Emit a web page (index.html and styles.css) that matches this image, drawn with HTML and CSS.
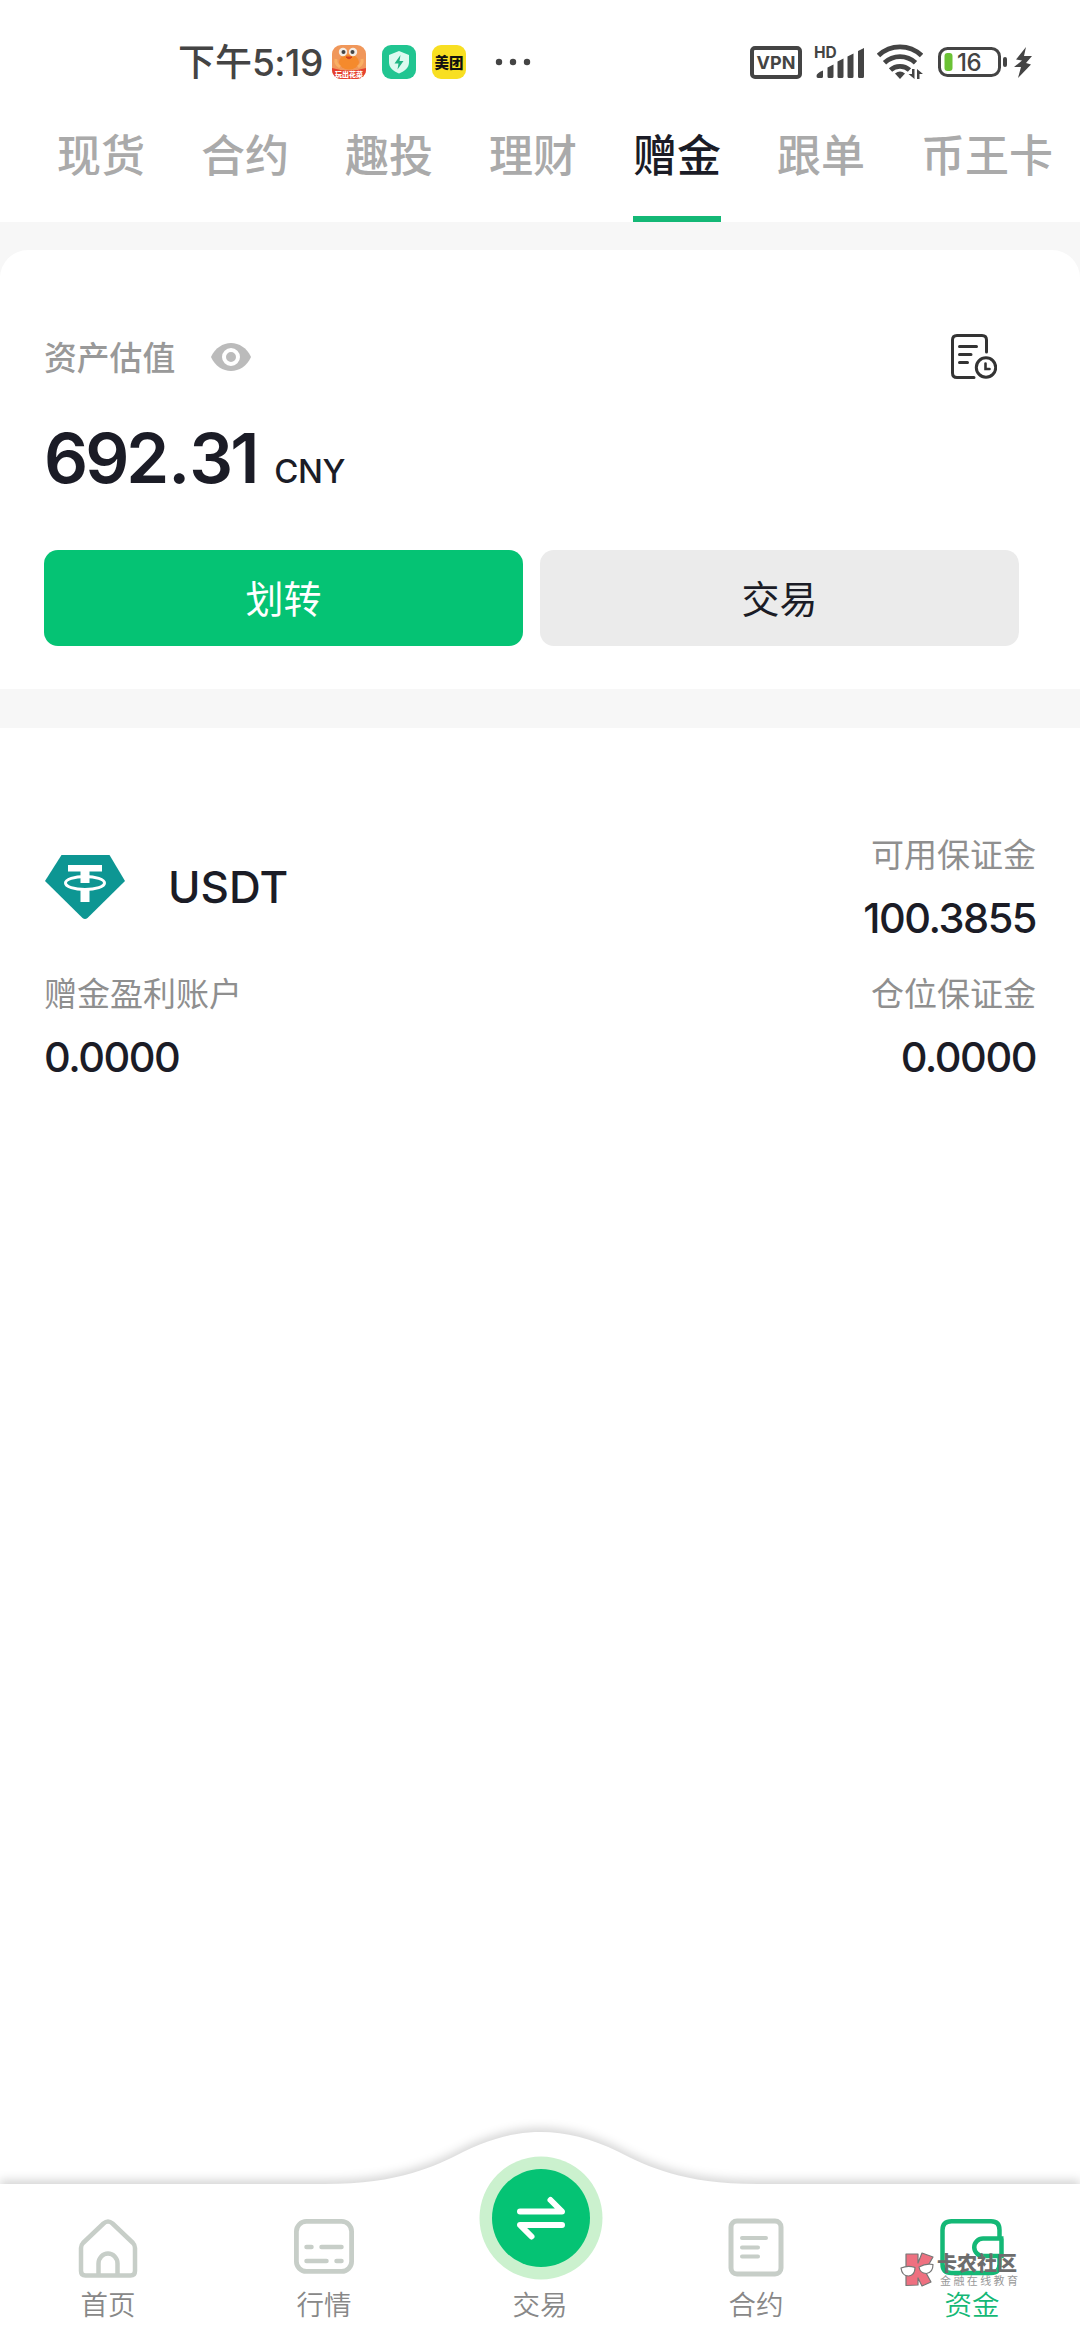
FILE: index.html
```html
<!DOCTYPE html>
<html lang="zh-CN">
<head>
<meta charset="utf-8">
<title>赠金</title>
<link rel="stylesheet" href="styles.css">
</head>
<body>
<div class="app">
  <header class="status">
    <div class="status-left">
      <span class="clock">下午<span class="clock-num">5:19</span></span>
      <div class="apps">
        <svg width="34" height="34" viewBox="0 0 34 34">
          <defs><clipPath id="tile"><rect width="34" height="34" rx="9"/></clipPath></defs>
          <g clip-path="url(#tile)">
            <rect width="34" height="34" fill="#f0975a"/>
            <ellipse cx="17" cy="17" rx="10" ry="7.500" fill="#f58a2c"/>
            <path d="M4 14q-1 5 4 8M30 14q1 5-4 8" stroke="#f9b064" stroke-width="3" fill="none"/>
            <circle cx="11" cy="7" r="4.200" fill="#f3ece4"/><circle cx="21" cy="7" r="4.200" fill="#f3ece4"/>
            <circle cx="11.500" cy="7" r="2" fill="#444"/><circle cx="20.500" cy="7" r="2" fill="#444"/>
            <path d="M14 12q3 3.500 6 0z" fill="#d2401c" stroke="#d2401c"/>
            <path d="M0 23q17 5 34 0v11H0z" fill="#e5402f"/>
          </g>
          <text class="tile-caption" x="17" y="31.500" text-anchor="middle">玩出花菜</text>
        </svg>
        <svg width="34" height="34" viewBox="0 0 34 34">
          <rect width="34" height="34" rx="9" fill="#21c591"/>
          <path d="M17 6l10 4v7c0 6-4 9-10 11.500C11 26 7 23 7 17v-7z" fill="#dcfaf0"/>
          <path d="M18.500 10l-6 8.500h4l-1 6 6-8.500h-4z" fill="#1fb483"/>
        </svg>
        <svg width="34" height="34" viewBox="0 0 34 34">
          <rect width="34" height="34" rx="9" fill="#f8df22"/>
          <text class="meituan" x="17" y="22.500" text-anchor="middle">美团</text>
        </svg>
      </div>
      <svg class="more" width="36" height="8" viewBox="0 0 36 8" fill="#444"><circle cx="4" cy="4" r="3.200"/><circle cx="18" cy="4" r="3.200"/><circle cx="32" cy="4" r="3.200"/></svg>
    </div>
    <div class="status-right">
      <span class="vpn">VPN</span>
      <svg class="signal" width="52" height="34" viewBox="0 0 52 34" fill="#444">
        <text class="hd" x="0" y="13">HD</text>
        <path d="M4 33q-1.500 0-1.500-2 0-3 6.500-5.500v6q0 1.500-1.500 1.500zM13.500 22.500l6-3v12q0 1.500-1.500 1.500h-3q-1.500 0-1.500-1.500zM23.500 16.500l6-3v18q0 1.500-1.500 1.500h-3q-1.500 0-1.500-1.500zM33.500 11.500l6-3v23q0 1.500-1.500 1.500h-3q-1.500 0-1.500-1.500zM44 6l6-3v28.500q0 1.500-1.500 1.500h-3q-1.500 0-1.500-1.500z"/>
      </svg>
      <svg class="wifi" width="46" height="36" viewBox="0 0 46 36" fill="none" stroke="#444" stroke-width="4.800">
        <path d="M1.500 11.500a31 31 0 0 1 43 0M7.500 18.800a22.500 22.500 0 0 1 31 0M13.500 26a14 14 0 0 1 19 0"/>
        <path d="M18 29.500q5-4 10 0l-5 5.500z" fill="#444" stroke="none"/>
        <path d="M37.500 25v10l-6-5h3.500v-5zM40 35v-10l6 5h-3.500v5z" fill="#444" stroke="none"/>
      </svg>
      <svg class="battery" width="70" height="30" viewBox="0 0 70 30">
        <rect x="1.500" y="1.500" width="60" height="27" rx="8" fill="none" stroke="#444" stroke-width="3"/>
        <rect x="6.500" y="6" width="8" height="18" rx="3" fill="#6bc235"/>
        <rect x="65" y="10" width="4" height="10" rx="2" fill="#444"/>
        <text class="charge" x="19" y="23.500">16</text>
      </svg>
      <svg width="18" height="31" viewBox="0 0 18 31" fill="#444"><path d="M12 0L2 12.500l6 1L0 20h7L4 31 17 17.500l-5-1.500 6-7h-8z"/></svg>
    </div>
  </header>

  <nav class="tabs">
    <span class="tab">现货</span><span class="tab">合约</span><span class="tab">趣投</span><span class="tab">理财</span><span class="tab active">赠金</span><span class="tab">跟单</span><span class="tab">币王卡</span>
  </nav>

  <main class="content">
    <section class="summary">
      <div class="summary-head">
        <span class="caption">资产估值</span>
        <svg class="eye" width="40" height="28" viewBox="0 0 40 28">
          <path d="M0 14C4 5 12 0 20 0s16 5 20 14c-4 9-12 14-20 14S4 23 0 14z" fill="#bbb"/>
          <circle cx="20" cy="14" r="7" fill="#bbb" stroke="#fff" stroke-width="4"/>
        </svg>
        <svg class="history" width="46" height="46" viewBox="0 0 46 46" fill="none" stroke="#333" stroke-width="3" stroke-linecap="round">
          <path d="M35.500 18V6q0-4.500-4.500-4.500H6Q1.500 1.500 1.500 6v33q0 4.500 4.500 4.500h17M8.500 12.500h17M8.500 20.500h11.500M8.500 28.500h8"/>
          <circle cx="35" cy="33.500" r="9.700"/><path d="M34.500 29.500v5.500h4" stroke-width="2.600"/>
        </svg>
      </div>
      <div class="total"><span class="amount">692<span class="point">.</span>31</span><span class="currency">CNY</span></div>
      <div class="actions">
        <button class="btn primary">划转</button>
        <button class="btn">交易</button>
      </div>
    </section>

    <section class="asset">
      <div class="coin">
        <svg width="82" height="66" viewBox="0 0 82 66">
          <path d="M17.500 1h48L81 27 43.500 64q-2.500 2-5 0L1 27z" fill="#0d9693"/>
          <path d="M24 11h34v6.500H45.500V29h-9V17.500H24zM36.500 34h9v14h-9z" fill="#fff"/>
          <ellipse cx="41" cy="29" rx="19.500" ry="6.500" fill="none" stroke="#fff" stroke-width="3"/>
        </svg>
        <span class="symbol">USDT</span>
      </div>
      <div class="cell right"><span class="label">可用保证金</span><span class="value">100.3855</span></div>
      <div class="cell"><span class="label">赠金盈利账户</span><span class="value">0.0000</span></div>
      <div class="cell right"><span class="label">仓位保证金</span><span class="value">0.0000</span></div>
    </section>
  </main>

  <footer class="bottom">
    <svg class="bottom-shape" width="1080" height="240" viewBox="0 0 1080 240">
      <path d="M-20 84H325C400 84 435 66 463 52 492 38 516 32 541 32s49 6 78 20c28 14 63 32 138 32h343v180H-20z" fill="#fff"/>
    </svg>
    <div class="item">
      <svg width="60" height="60" viewBox="0 0 60 60" fill="none" stroke="#c7cec8" stroke-width="4.500" stroke-linejoin="round">
        <path d="M25.500 5.500q4.500-4 9 0L55 25q2 2 2 5v23q0 4.500-4.500 4.500h-45Q3 57.500 3 53V30q0-3 2-5zM20.500 57V45.500a9.500 10 0 0 1 19 0V57"/>
      </svg>
      <span>首页</span>
    </div>
    <div class="item">
      <svg width="60" height="60" viewBox="0 0 60 60" fill="none" stroke="#c7cec8" stroke-width="4.800" stroke-linecap="round">
        <rect x="2.400" y="3.400" width="55.200" height="50" rx="10"/><path d="M12.500 29h5M27.500 29h20M12.500 43h20M42.500 43h5" stroke-width="4.500"/>
      </svg>
      <span>行情</span>
    </div>
    <div class="item trade">
      <svg width="124" height="124" viewBox="0 0 124 124">
        <circle cx="62" cy="62" r="61.500" fill="#cbf1ce"/><circle cx="62" cy="62" r="49" fill="#05c374"/>
        <path d="M41 55.500h42L71.500 44M83 69H41l11.500 11.500" fill="none" stroke="#fff" stroke-width="6" stroke-linecap="round" stroke-linejoin="round"/>
      </svg>
      <span>交易</span>
    </div>
    <div class="item">
      <svg width="60" height="60" viewBox="0 0 60 60" fill="none" stroke="#c7cec8" stroke-width="5" stroke-linecap="round">
        <rect x="5" y="3" width="50" height="53" rx="6"/><path d="M16 20h24M16 29.500h16M16 38.500h16" stroke-width="4"/>
      </svg>
      <span>合约</span>
    </div>
    <div class="item selected">
      <svg width="66" height="60" viewBox="0 0 66 60" fill="none" stroke="#14b876" stroke-width="4.500">
        <path d="M60.500 20V12q0-8.700-8.500-8.700H12.500Q3.500 3.300 3.500 12v34q0 9 9 9h39.500q8.500 0 8.500-9v-8M64.500 20.500H44a8.700 8.700 0 0 0 0 17.500h18.500V20.500"/>
      </svg>
      <span>资金</span>
    </div>
    <div class="watermark">
      <svg width="36" height="36" viewBox="0 0 36 36" stroke="#777" stroke-width="1.200" stroke-linejoin="round">
        <path d="M6 2h12v9l4-10 11 4-8 14 6 11-9 4-4-8v7l-12 .5z" fill="#ee7080"/>
        <path d="M1 16q7-3 14-.5 0 8-6.500 8.500Q2 24 1 16zM19 15q7-4 14-2.500 0 8-6.500 9-6.500 0-7.500-6.500z" fill="#fff"/>
      </svg>
      <div class="mark-text"><b>卡农社区</b><span>金融在线教育</span></div>
    </div>
  </footer>
</div>
</body>
</html>
```
FILE: styles.css
```css
* { box-sizing: border-box; }
body { margin: 0; background: #fff; }
svg { display: block; flex: none; }

.app {
  width: 1080px;
  height: 2340px;
  display: flex;
  flex-direction: column;
  overflow: hidden;
  background: #fff;
  color: #1b1c26;
  font-family: Inter, "Noto Sans CJK SC", sans-serif;
}

/* status bar */
.status {
  height: 124px;
  padding: 0 48px 0 178px;
  display: flex;
  justify-content: space-between;
  align-items: center;
  color: #444;
}
.status-left, .status-right, .apps { display: flex; align-items: center; }
.clock { width: 154px; padding-bottom: 2px; font: 500 37px/50px "Noto Sans CJK SC", sans-serif; white-space: nowrap; }
.clock-num { font: 500 37px/50px Inter, sans-serif; letter-spacing: -0.500px; }
.apps { gap: 16px; }
.more { margin-left: 29px; }
.tile-caption { font: 900 7px "Noto Sans CJK SC", sans-serif; fill: #fff; }
.meituan { font: 900 14.500px "Noto Sans CJK SC", sans-serif; fill: #111; }
.vpn {
  width: 52px;
  height: 33px;
  border: 4px solid #444;
  border-radius: 5px;
  font: 700 18px/25px Inter, sans-serif;
  text-align: center;
}
.signal { margin-left: 12px; overflow: visible; }
.hd { font: 700 15.500px Inter, sans-serif; }
.wifi { margin-left: 11px; }
.battery { margin: 0 6px 0 15px; }
.charge { font: 500 24px Inter, sans-serif; letter-spacing: -0.500px; fill: #444; }

/* account tabs */
.tabs {
  height: 98px;
  padding-left: 57px;
  display: flex;
  gap: 56px;
  color: #aaa;
  font: 500 44px/58px "Noto Sans CJK SC", sans-serif;
  white-space: nowrap;
}
.tab { flex: none; height: 98px; }
.active { color: #1b1c26; border-bottom: 6px solid #14b876; }

/* asset summary */
.content { flex: 1; background: #f7f7f7; padding-top: 28px; display: flex; flex-direction: column; }
.summary {
  height: 439px;
  padding: 82px 61px 0 44px;
  border-radius: 28px 28px 0 0;
  background: #fff;
}
.summary-head { height: 50px; display: flex; align-items: center; }
.caption { padding-bottom: 3px; font: 500 32.800px/48px "Noto Sans CJK SC", sans-serif; color: #999; }
.eye { margin-left: 36px; }
.history { margin-left: auto; margin-right: 22px; }
.total { height: 168px; padding-top: 34px; display: flex; align-items: baseline; }
.amount { font-size: 69px; line-height: 84px; font-weight: 600; letter-spacing: -3px; }
.point { padding: 0 2px; }
.currency { margin-left: 18px; font-size: 33px; font-weight: 500; letter-spacing: -0.500px; }
.actions { display: grid; grid-template-columns: 1fr 1fr; gap: 17px; }
.btn {
  height: 96px;
  padding: 0 0 3px;
  border: 0;
  border-radius: 14px;
  background: #ebebeb;
  color: #1b1c26;
  font: 400 38px/50px "Noto Sans CJK SC", sans-serif;
}
.primary { background: #05c374; color: #fff; }

/* asset row */
.asset {
  flex: 1;
  margin-top: 39px;
  padding: 101px 44px 0;
  background: #fff;
  display: grid;
  grid-template-columns: 1fr 1fr;
  grid-template-rows: 139px 139px;
  align-content: start;
}
.coin { height: 116px; display: flex; align-items: center; gap: 42px; }
.symbol { font-size: 44px; font-weight: 500; }
.cell { display: flex; flex-direction: column; gap: 15px; }
.right { align-items: flex-end; }
.label { font: 400 33px/48px "Noto Sans CJK SC", sans-serif; color: #8f8f8f; }
.value { font-size: 41.500px; line-height: 52px; font-weight: 500; letter-spacing: -1.500px; }

/* bottom navigation */
.bottom {
  position: relative;
  height: 156px;
  display: grid;
  grid-template-columns: repeat(5, 216px);
  grid-template-rows: 156px;
  background: #fff;
}
.bottom-shape { position: absolute; left: 0; bottom: 0; filter: drop-shadow(0 -4px 5px rgba(0, 0, 0, 0.16)); }
.item {
  position: relative;
  display: flex;
  flex-direction: column;
  align-items: center;
  justify-content: flex-end;
  gap: 5px;
  padding-bottom: 17px;
  color: #888;
  font: 350 27.500px/40px "Noto Sans CJK SC", sans-serif;
}
.trade { gap: 3px; }
.trade svg { margin-left: 2px; }
.selected { color: #14b876; }
.watermark { position: absolute; left: 900px; top: 68px; display: flex; gap: 1px; color: #6d6d6d; }
.mark-text { display: flex; flex-direction: column; white-space: nowrap; }
.mark-text b { font: 900 20px/22px "Noto Sans CJK SC", sans-serif; }
.mark-text span { margin-left: 3px; font: 400 11px/12px "Noto Sans CJK SC", sans-serif; letter-spacing: 2.400px; color: #999; }
```
